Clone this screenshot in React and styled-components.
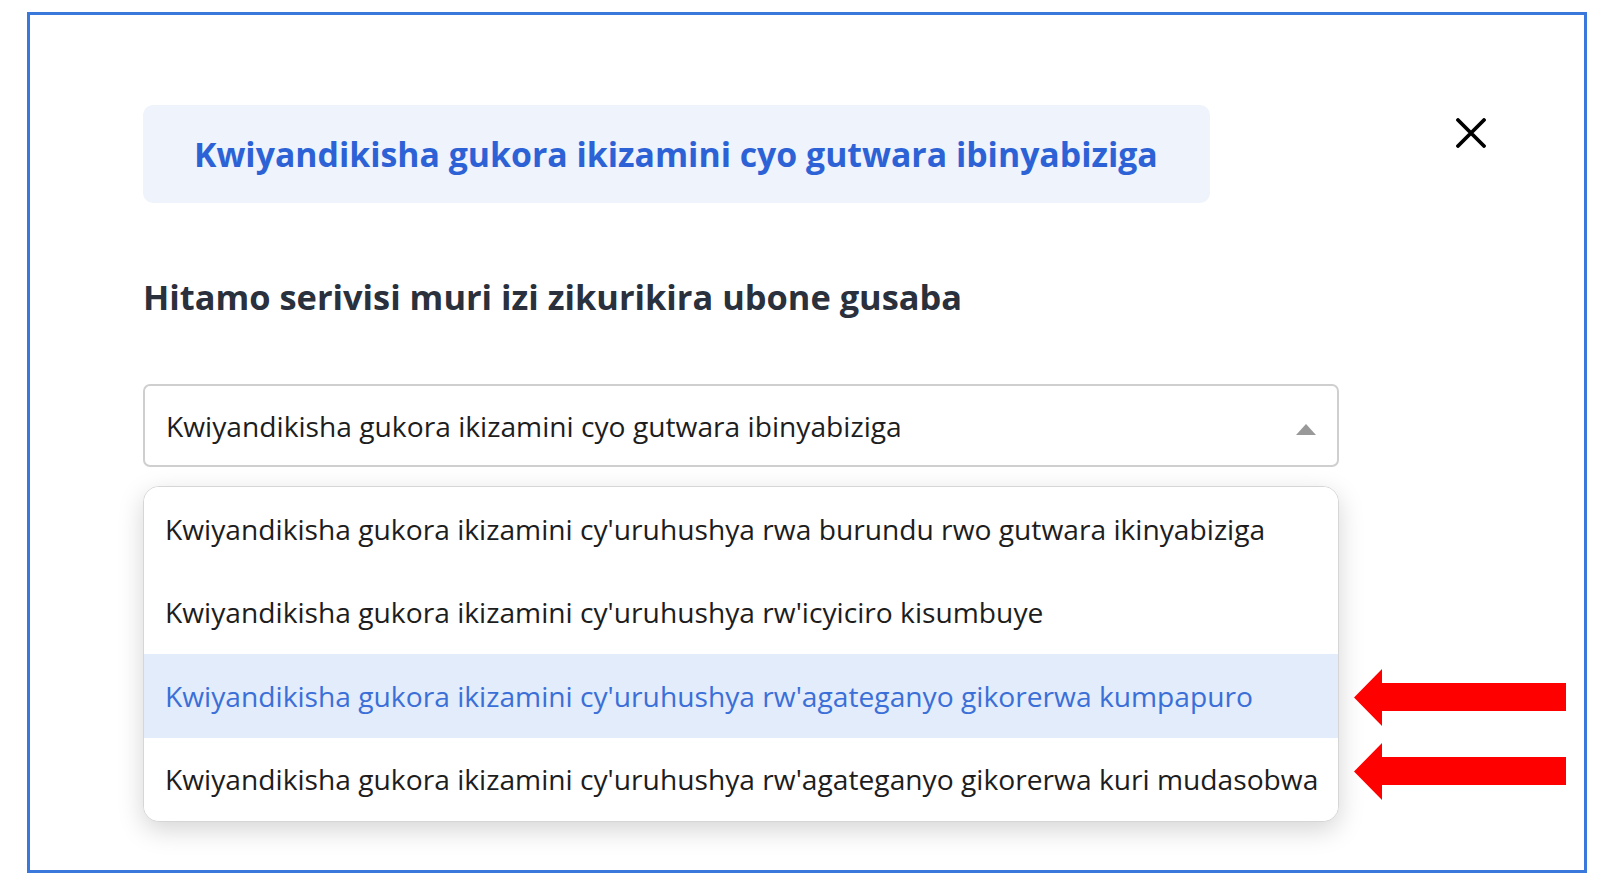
import React from 'react'
import styled, { createGlobalStyle } from 'styled-components'

const GlobalStyle = createGlobalStyle`
  html, body {
    margin: 0;
    padding: 0;
    background: #ffffff;
  }
  body {
    font-family: "Open Sans", "Noto Sans", sans-serif;
  }
`

const services = [
  "Kwiyandikisha gukora ikizamini cy'uruhushya rwa burundu rwo gutwara ikinyabiziga",
  "Kwiyandikisha gukora ikizamini cy'uruhushya rw'icyiciro kisumbuye",
  "Kwiyandikisha gukora ikizamini cy'uruhushya rw'agateganyo gikorerwa kumpapuro",
  "Kwiyandikisha gukora ikizamini cy'uruhushya rw'agateganyo gikorerwa kuri mudasobwa",
]

const CloseIcon = () =>
  <svg width="30" height="30" viewBox="0 0 30 30">
    <path d="M2 2 L28 28 M28 2 L2 28" stroke="#000" strokeWidth="3.8" strokeLinecap="round" />
  </svg>

const Arrow = ({ top }) =>
  <StyledArrow style={{ top }} width="212" height="57" viewBox="0 0 212 57">
    <polygon points="0,28.5 28,0 28,14 212,14 212,42 28,42 28,57" fill="#ff0000" />
  </StyledArrow>

export default () =>
  <>
    <GlobalStyle />
    <StyledFrame>
      <StyledHeaderRow>
        <StyledTitleBox>
          <StyledTitle>Kwiyandikisha gukora ikizamini cyo gutwara ibinyabiziga</StyledTitle>
        </StyledTitleBox>
        <StyledCloseButton aria-label="close">
          <CloseIcon />
        </StyledCloseButton>
      </StyledHeaderRow>

      <StyledHeading>Hitamo serivisi muri izi zikurikira ubone gusaba</StyledHeading>

      <StyledSelect>
        <StyledSelectValue>Kwiyandikisha gukora ikizamini cyo gutwara ibinyabiziga</StyledSelectValue>
        <StyledCaret />
      </StyledSelect>

      <StyledMenu>
        {services.map((s, i) =>
          <StyledOption key={s} active={i === 2}>{s}</StyledOption>
        )}
      </StyledMenu>

      <Arrow top={654} />
      <Arrow top={728} />
    </StyledFrame>
  </>

const StyledFrame = styled.div`
  position: relative;
  box-sizing: border-box;
  margin: 12px 0 0 27px;
  width: 1560px;
  height: 861px;
  border: 3px solid #3b78db;
  padding: 90px 0 0 113px;
`

const StyledHeaderRow = styled.div`
  display: flex;
  align-items: flex-start;
`

const StyledTitleBox = styled.div`
  box-sizing: border-box;
  width: 1067px;
  height: 98px;
  background: #eef3fc;
  border-radius: 10px;
  display: flex;
  align-items: center;
  padding-left: 51px;
`

const StyledTitle = styled.h1`
  margin: 0;
  font-size: 33.8px;
  font-weight: 700;
  color: #2d62d6;
  white-space: nowrap;
`

const StyledCloseButton = styled.button`
  margin: 13px 0 0 246px;
  width: 30px;
  height: 30px;
  padding: 0;
  border: none;
  background: transparent;
  display: flex;
`

const StyledHeading = styled.h2`
  margin: 72px 0 0 0;
  font-size: 34.4px;
  line-height: 44px;
  font-weight: 700;
  color: #2a303c;
  white-space: nowrap;
`

const StyledSelect = styled.div`
  box-sizing: border-box;
  margin-top: 65px;
  width: 1196px;
  height: 83px;
  border: 2px solid #cfcfcf;
  border-radius: 7px;
  display: flex;
  align-items: center;
  justify-content: space-between;
  padding: 0 21px 0 21px;
`

const StyledSelectValue = styled.span`
  font-size: 28.2px;
  color: #1d1d1d;
  white-space: nowrap;
`

const StyledCaret = styled.span`
  width: 0;
  height: 0;
  border-left: 10.5px solid transparent;
  border-right: 10.5px solid transparent;
  border-bottom: 11px solid #999999;
  margin-top: 8px;
`

const StyledMenu = styled.div`
  box-sizing: border-box;
  margin-top: 19px;
  width: 1196px;
  border: 1.5px solid #d6d6d6;
  border-radius: 16px;
  overflow: hidden;
  background: #ffffff;
  box-shadow: 0 8px 26px rgba(0, 0, 0, .17);
`

const StyledOption = styled.div`
  height: 83.5px;
  display: flex;
  align-items: center;
  padding-left: 21px;
  font-size: 28.2px;
  white-space: nowrap;
  background: ${({ active }) => active ? '#e2ecfa' : '#ffffff'};
  color: ${({ active }) => active ? '#3b6fd8' : '#1d1d1d'};
`

const StyledArrow = styled.svg`
  position: absolute;
  left: 1324px;
`
